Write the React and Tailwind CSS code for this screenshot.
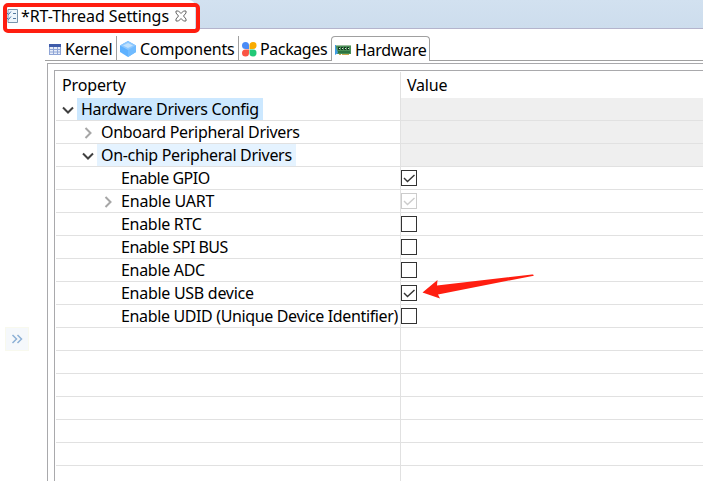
import React from "react";

const font = { fontFamily: '"Noto Sans", "Open Sans", sans-serif' };

const rows = [
  { label: "Hardware Drivers Config", indent: "pl-[21px]", track: "tracking-[-0.32px]", arrow: "down", hl: "bg-[#cce8ff]", locked: true },
  { label: "Onboard Peripheral Drivers", indent: "pl-[41px]", track: "tracking-[-0.31px]", arrow: "right", locked: true },
  { label: "On-chip Peripheral Drivers", indent: "pl-[41px]", track: "tracking-[-0.31px]", arrow: "down", hl: "bg-[#e5f3ff]", locked: true },
  { label: "Enable GPIO", indent: "pl-[61px]", track: "tracking-[-0.5px]", box: "on" },
  { label: "Enable UART", indent: "pl-[61px]", track: "tracking-[-0.2px]", arrow: "right", box: "dim" },
  { label: "Enable RTC", indent: "pl-[61px]", track: "tracking-[-0.3px]", box: "off" },
  { label: "Enable SPI BUS", indent: "pl-[61px]", track: "tracking-[-0.5px]", box: "off" },
  { label: "Enable ADC", indent: "pl-[61px]", track: "tracking-[-0.3px]", box: "off" },
  { label: "Enable USB device", indent: "pl-[61px]", track: "tracking-[-0.28px]", box: "on" },
  { label: "Enable UDID (Unique Device Identifier)", indent: "pl-[61px]", track: "tracking-[-0.36px]", box: "off" },
  {}, {}, {}, {}, {}, {}, {},
];

function Arrow({ kind }) {
  return (
    <svg className="absolute -left-[16px] top-[5px]" width="14" height="14" fill="none" strokeWidth="2">
      {kind === "down" ? (
        <path d="M2 4.500l5 5 5-5" stroke="#404040" />
      ) : (
        <path d="M4.500 2l5 5-5 5" stroke="#a6a6a6" />
      )}
    </svg>
  );
}

function Box({ state }) {
  const dim = state === "dim";
  return (
    <span className={`mt-[3px] flex h-4 w-4 border ${dim ? "border-[#cccccc]" : "border-[#333333]"} bg-white`}>
      {state !== "off" && (
        <svg width="14" height="14" fill="none" stroke={dim ? "#cccccc" : "#333333"} strokeWidth="1.4">
          <path d="M2 7l3.5 3.6L12.5 4" />
        </svg>
      )}
    </span>
  );
}

function Row({ label, indent, track, arrow, hl, locked, box }) {
  return (
    <div className="flex h-[23px] border-b border-[#e1e1e1]">
      <div className={`flex w-[344px] shrink-0 ${indent || ""}`}>
        {label && (
          <div className={`relative h-[22px] whitespace-nowrap pl-1 pr-1 leading-[22px] ${track} ${hl || ""}`}>
            {arrow && <Arrow kind={arrow} />}
            {label}
          </div>
        )}
      </div>
      <div className={`flex-1 border-l border-[#e1e1e1] ${locked ? "bg-[#efefef]" : ""}`}>
        {box && <Box state={box} />}
      </div>
    </div>
  );
}

function TableIcon() {
  return (
    <svg width="12" height="11">
      <path d="M0 0h12v11H0z" fill="#8fa5d6" />
      <path d="M0 0h12v3H0z" fill="#3e5ba9" />
      <path d="M1 3h3v2H1zm4 0h3v2H5zm4 0h2v2H9zM1 6h3v1.500H1zm4 0h3v1.500H5zm4 0h2v1.500H9zM1 8.500h3V10H1zm4 0h3V10H5zm4 0h2V10H9z" fill="#e8edf8" />
    </svg>
  );
}

function CubeIcon() {
  return (
    <svg width="16" height="16">
      <path d="M0 4.500L8 0l8 4.500V11l-8 5-8-5z" fill="#5eb1ff" />
      <path d="M16 4.500L8 8.500V16l8-5z" fill="#70bbff" />
      <path d="M8 0l8 4.500-8 4.500-8-4.500z" fill="#8dc8ff" />
      <path d="M8 2l5 2.500-5 2.500-5-2.500z" fill="#c1e1fc" />
    </svg>
  );
}

function PetalsIcon() {
  return (
    <svg width="15" height="15">
      <path d="M3.500 0A3.500 3.500 0 0 1 7 3.500V7H3.500a3.500 3.500 0 0 1 0-7z" fill="#4a8cf7" />
      <path d="M11 0a3.500 3.500 0 0 1 0 7H7.500V3.500A3.500 3.500 0 0 1 11 0z" fill="#f9ab00" />
      <path d="M3.500 7.500H7V11a3.500 3.500 0 1 1-3.500-3.500z" fill="#fa5544" />
      <path d="M7.500 7.500H11A3.500 3.500 0 1 1 7.500 11z" fill="#21c978" />
    </svg>
  );
}

function BoardIcon() {
  return (
    <svg width="16" height="12">
      <path d="M0 1h16v9H2z" fill="#4b8f58" />
      <path d="M1 1h15v1H1z" fill="#9dbd9e" />
      <path d="M3 3h2v3H3zm3 0h2v3H6zm3 0h2v3H9zm3 0h2v3h-2z" fill="#173d26" />
      <path d="M4 4h1v1H4zm3 0h1v1H7zm3 0h1v1h-1zm3 0h1v1h-1z" fill="#d5e6cf" />
      <path d="M3 7h12v2H3z" fill="#2b7440" />
      <path d="M4 10h2v1H4zm3 0h7v1H7z" fill="#c9a94d" />
      <path d="M0 1h1v2l2 6-3 2z" fill="#3f9be0" />
    </svg>
  );
}

export default function App() {
  return (
    <div className="relative h-[481px] w-[703px] overflow-hidden bg-white text-[16px] text-black" style={font}>
      <div className="flex h-[29px] border-b border-[#b4b4cc] bg-linear-to-b from-[#d2e1f0] to-[#cddded]">
        <div className="flex h-[29px] w-[195px] items-center rounded-tr-[6px] bg-white pl-[6px] pt-[3px]">
          <svg width="12" height="14" fill="none">
            <path d="M2 .5h9.500v13H2z" fill="#edf5fb" stroke="#7895ad" />
            <path d="M7 4.500h3M7 9.500h3" stroke="#53799f" />
            <path d="M1 4l1.500 1.500L5 2.500M1 9l1.500 1.500L5 7.500" stroke="#4776ad" />
          </svg>
          <span className="ml-[3px] whitespace-nowrap leading-[26px] tracking-[-0.08px]">*RT-Thread Settings</span>
          <svg className="mb-px ml-[6px]" width="12" height="12" fill="none" stroke="#666">
            <path d="M1 1h2.500L6 3.500 8.500 1H11v2L8.500 6 11 9v2H8.500L6 8.500 3.500 11H1V9l2.500-3L1 3z" />
          </svg>
        </div>
      </div>
      <div className="ml-[45px] mt-[7px] flex h-[25px] border-b border-[#a0a0a0]">
        <div className="flex w-[72px] items-center border-r border-[#a0a0a0] pl-1 pt-[2px]">
          <TableIcon />
          <span className="ml-1 tracking-[-0.2px]">Kernel</span>
        </div>
        <div className="flex w-[122px] items-center border-r border-[#a0a0a0] pl-[3px] pt-[2px]">
          <CubeIcon />
          <span className="ml-1 tracking-[-0.2px]">Components</span>
        </div>
        <div className="flex w-[92px] items-center pl-[3px] pt-[2px]">
          <PetalsIcon />
          <span className="ml-[3px] tracking-[-0.4px]">Packages</span>
        </div>
        <div className="flex h-[25px] w-[99px] items-center rounded-t-[4px] border border-b-0 border-[#a0a0a0] bg-white pl-[3px] pt-[2px]">
          <BoardIcon />
          <span className="ml-1 tracking-[-0.3px]">Hardware</span>
        </div>
      </div>
      <div className="ml-[47px] mt-[2px] h-[420px] border-l border-t border-[#a9a9ac] pl-[6px] pt-[6px]">
        <div className="h-[420px] border-l border-t border-[#a9a9ac] pl-px pt-px">
          <div className="flex h-[26px] leading-[26px]">
            <div className="w-[344px] pl-[6px] tracking-[-0.15px]">Property</div>
            <div className="flex-1 border-l border-[#e1e1e1] pl-[6px] tracking-[-0.2px]">Value</div>
          </div>
          {rows.map((r, i) => <Row key={i} {...r} />)}
        </div>
      </div>
      <div className="absolute left-[3px] top-[3px] h-[30px] w-[197px] rounded-[5px] border-4 border-[#ff1e10]" />
      <div className="absolute left-[5px] top-[327px] flex h-6 w-6 items-center justify-center border border-[#f8f9ee] bg-[#f5f8fb]">
        <svg width="12" height="10" fill="none" stroke="#8db0d6" strokeWidth="1.500"><path d="M1.500 1l4 4-4 4M6.500 1l4 4-4 4" /></svg>
      </div>
      <svg className="absolute left-[420px] top-[270px]" width="120" height="32"><path d="M2.500 22.500L17.500 10l-.5 5.500L112 4.500c2 0 2.500 1 .5 1.400L18 24.500l2 4z" fill="#ff1e10" /></svg>
    </div>
  );
}
